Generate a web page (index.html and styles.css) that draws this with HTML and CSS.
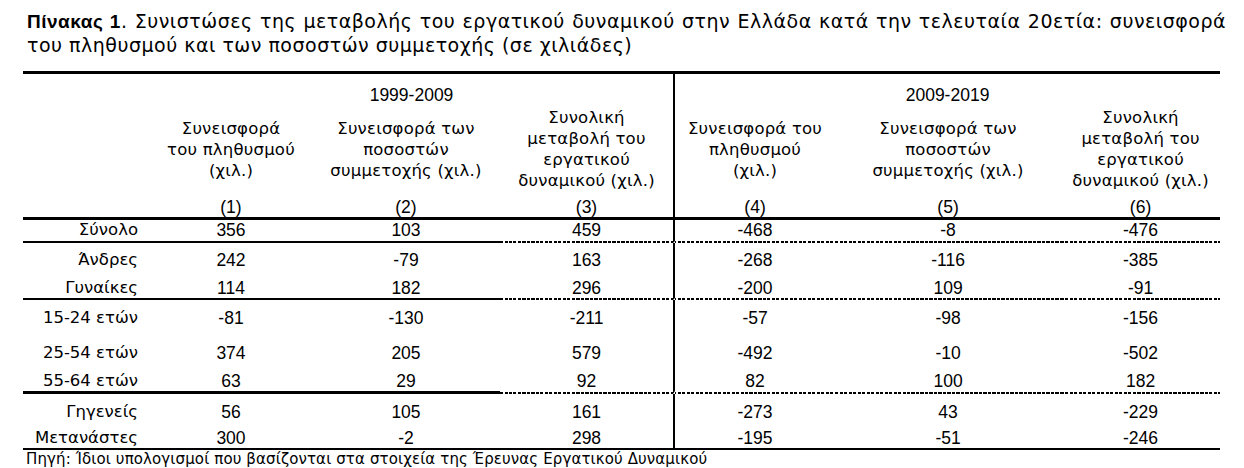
FILE: index.html
```html
<!DOCTYPE html>
<html lang="el">
<head>
<meta charset="utf-8">
<title>Πίνακας 1</title>
<link rel="stylesheet" href="styles.css">
</head>
<body>
<div class="page">
  <div class="title">
    <span class="t1"><b>Πίνακας 1</b>. Συνιστώσες της μεταβολής του εργατικού δυναμικού στην Ελλάδα κατά την τελευταία 20ετία: συνεισφορά</span>
    <span class="t2">του πληθυσμού και των ποσοστών συμμετοχής (σε χιλιάδες)</span>
  </div>
  <table class="tbl">
    <colgroup>
      <col class="c-label"><col class="c1"><col class="c2"><col class="c3"><col class="c4"><col class="c5"><col class="c6">
    </colgroup>
    <thead>
      <tr class="r-year">
        <th></th>
        <th colspan="3">1999-2009</th>
        <th colspan="3" class="vl">2009-2019</th>
      </tr>
      <tr class="r-names">
        <th></th>
        <th>Συνεισφορά<br>του πληθυσμού<br>(χιλ.)</th>
        <th>Συνεισφορά των<br>ποσοστών<br>συμμετοχής (χιλ.)</th>
        <th>Συνολική<br>μεταβολή του<br>εργατικού<br>δυναμικού (χιλ.)</th>
        <th class="vl">Συνεισφορά του<br>πληθυσμού<br>(χιλ.)</th>
        <th>Συνεισφορά των<br>ποσοστών<br>συμμετοχής (χιλ.)</th>
        <th>Συνολική<br>μεταβολή του<br>εργατικού<br>δυναμικού (χιλ.)</th>
      </tr>
      <tr class="r-num">
        <th></th>
        <th>(1)</th><th>(2)</th><th>(3)</th><th class="vl">(4)</th><th>(5)</th><th>(6)</th>
      </tr>
    </thead>
    <tbody>
      <tr class="r-total sep">
        <td class="lab">Σύνολο</td><td class="s">356</td><td class="s">103</td><td class="d">459</td><td class="d vl">-468</td><td class="d">-8</td><td class="d">-476</td>
      </tr>
      <tr class="r-first">
        <td class="lab">Άνδρες</td><td>242</td><td>-79</td><td>163</td><td class="vl">-268</td><td>-116</td><td>-385</td>
      </tr>
      <tr class="r-last sep">
        <td class="lab">Γυναίκες</td><td class="s">114</td><td class="s">182</td><td class="d">296</td><td class="d vl">-200</td><td class="d">109</td><td class="d">-91</td>
      </tr>
      <tr class="r-age1">
        <td class="lab">15-24 ετών</td><td>-81</td><td>-130</td><td>-211</td><td class="vl">-57</td><td>-98</td><td>-156</td>
      </tr>
      <tr class="r-age2">
        <td class="lab">25-54 ετών</td><td>374</td><td>205</td><td>579</td><td class="vl">-492</td><td>-10</td><td>-502</td>
      </tr>
      <tr class="r-age3 sep thick">
        <td class="lab">55-64 ετών</td><td class="s">63</td><td class="s">29</td><td class="d">92</td><td class="d vl">82</td><td class="d">100</td><td class="d">182</td>
      </tr>
      <tr class="r-first2">
        <td class="lab">Γηγενείς</td><td>56</td><td>105</td><td>161</td><td class="vl">-273</td><td>43</td><td>-229</td>
      </tr>
      <tr class="r-end">
        <td class="lab">Μετανάστες</td><td>300</td><td>-2</td><td>298</td><td class="vl">-195</td><td>-51</td><td>-246</td>
      </tr>
    </tbody>
  </table>
  <p class="source">Πηγή: Ίδιοι υπολογισμοί που βασίζονται στα στοιχεία της Έρευνας Εργατικού Δυναμικού</p>
</div>
</body>
</html>
```
FILE: styles.css
```css
html, body {
  margin: 0;
  padding: 0;
  background: #fff;
  color: #000;
}
body {
  font-family: "DejaVu Sans", "Liberation Sans", sans-serif;
}
.page {
  width: 1244px;
  height: 468px;
  padding-left: 23px;
  box-sizing: border-box;
  overflow: hidden;
}
.title {
  width: 1199px;
  margin-left: 4px;
  padding-top: 10px;
  font-size: 19px;
  line-height: 22.5px;
  letter-spacing: 0.5px;
}
.title .t1 {
  display: block;
  text-align: justify;
  text-align-last: justify;
}
.title .t2 {
  display: block;
  white-space: nowrap;
}
.title b {
  font-family: "Liberation Sans", sans-serif;
  font-weight: bold;
  letter-spacing: 0.5px;
}
.tbl {
  margin-top: 15px;
  width: 1197px;
  table-layout: fixed;
  border-collapse: separate;
  border-spacing: 0;
  border-top: 3px solid #000;
  border-bottom: 2px solid #000;
  font-family: "Liberation Sans", sans-serif;
  font-size: 17.5px;
  line-height: 20px;
}
.c-label { width: 127px; }
.c1 { width: 162px; }
.c2 { width: 188px; }
.c3 { width: 173px; }
.c4 { width: 162px; }
.c5 { width: 226px; }
.c6 { width: 159px; }
.tbl th, .tbl td {
  padding: 0;
  text-align: center;
  font-weight: normal;
  white-space: nowrap;
}
.tbl .vl {
  border-left: 2px solid #000;
}
.tbl td.lab {
  text-align: right;
  padding-right: 12px;
  font-family: "DejaVu Sans", sans-serif;
  font-size: 16.5px;
}
.r-year th {
  padding-top: 11px;
  padding-bottom: 2px;
  vertical-align: top;
}
.r-names th {
  vertical-align: middle;
  font-family: "DejaVu Sans", sans-serif;
  font-size: 16.5px;
  letter-spacing: 0.2px;
  line-height: 21px;
  height: 84px;
}
.r-num th {
  padding-top: 6px;
  padding-bottom: 0;
  border-bottom: 3px solid #000;
}
/* separators: solid in the first columns, dashed in the rest */
.sep td {
  border-bottom: 2px solid transparent;
}
.sep td.lab, .sep td.s {
  border-bottom-color: #000;
}
.sep td.d {
  background-image: repeating-linear-gradient(to right, #000 0 3px, transparent 3px 4.5px);
  background-repeat: no-repeat;
  background-size: 100% 2px;
  background-position: left bottom;
  background-origin: border-box;
  background-clip: border-box;
}
.thick td {
  border-bottom-width: 3px;
}
.r-total td {
  padding-top: 0;
  padding-bottom: 1px;
}
.r-first td {
  padding-top: 7px;
  padding-bottom: 0;
}
.r-last td {
  padding-top: 8px;
  padding-bottom: 0;
}
.r-age1 td {
  padding-top: 8px;
  padding-bottom: 5px;
}
.r-age2 td {
  padding-top: 10px;
  padding-bottom: 0;
}
.r-age3 td {
  padding-top: 8px;
  padding-bottom: 0;
}
.r-first2 td {
  padding-top: 8px;
  padding-bottom: 0;
}
.r-end td {
  padding-top: 6px;
  padding-bottom: 0;
}
.source {
  margin: 0 0 0 3px;
  font-size: 15px;
  line-height: 19px;
  letter-spacing: 0.12px;
  white-space: nowrap;
}
```
